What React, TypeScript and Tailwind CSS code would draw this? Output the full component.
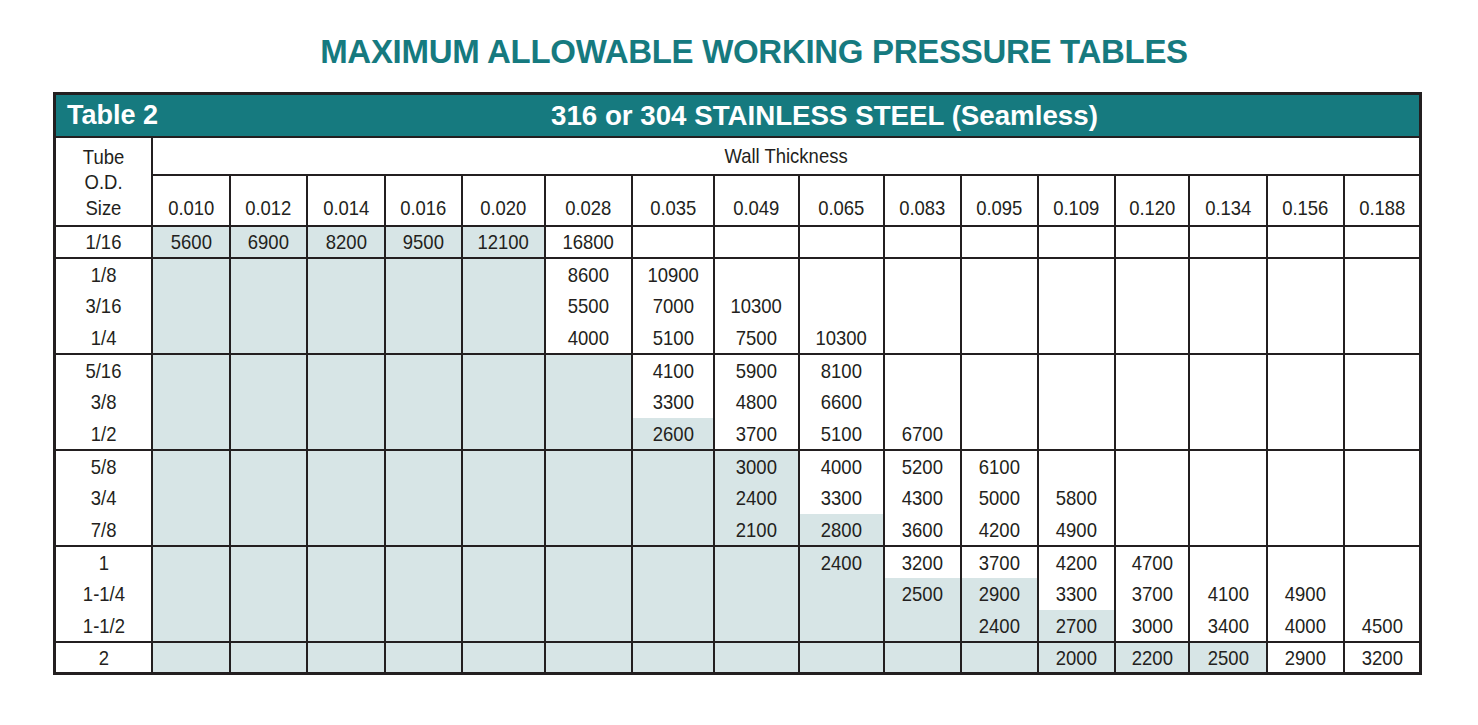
const thicknesses = [
  '0.010', '0.012', '0.014', '0.016', '0.020', '0.028', '0.035', '0.049',
  '0.065', '0.083', '0.095', '0.109', '0.120', '0.134', '0.156', '0.188',
]

type Row = { size: string; start: number; values: string[]; shaded: number }

// each inner array is one block of rows between ruled lines
const groups: Row[][] = [
  [{ size: '1/16', start: 0, values: ['5600', '6900', '8200', '9500', '12100', '16800'], shaded: 5 }],
  [
    { size: '1/8', start: 5, values: ['8600', '10900'], shaded: 5 },
    { size: '3/16', start: 5, values: ['5500', '7000', '10300'], shaded: 5 },
    { size: '1/4', start: 5, values: ['4000', '5100', '7500', '10300'], shaded: 5 },
  ],
  [
    { size: '5/16', start: 6, values: ['4100', '5900', '8100'], shaded: 6 },
    { size: '3/8', start: 6, values: ['3300', '4800', '6600'], shaded: 6 },
    { size: '1/2', start: 6, values: ['2600', '3700', '5100', '6700'], shaded: 7 },
  ],
  [
    { size: '5/8', start: 7, values: ['3000', '4000', '5200', '6100'], shaded: 8 },
    { size: '3/4', start: 7, values: ['2400', '3300', '4300', '5000', '5800'], shaded: 8 },
    { size: '7/8', start: 7, values: ['2100', '2800', '3600', '4200', '4900'], shaded: 9 },
  ],
  [
    { size: '1', start: 8, values: ['2400', '3200', '3700', '4200', '4700'], shaded: 9 },
    { size: '1-1/4', start: 9, values: ['2500', '2900', '3300', '3700', '4100', '4900'], shaded: 11 },
    { size: '1-1/2', start: 10, values: ['2400', '2700', '3000', '3400', '4000', '4500'], shaded: 12 },
  ],
  [{ size: '2', start: 11, values: ['2000', '2200', '2500', '2900', '3200'], shaded: 14 }],
]

const subRowHeights = (count: number, gi: number) => {
  if (count === 3) return ['h-[31px]', 'h-[32px]', 'h-[31px]']
  return gi === 0 ? ['h-[30px]'] : ['h-[29px]']
}

// the printed table uses a condensed face, so squeeze the glyphs a little
function Narrow({ children }: { children: React.ReactNode }) {
  return <span className="inline-block scale-x-[0.88] whitespace-nowrap">{children}</span>
}

export default function App() {
  return (
    <div className="min-h-screen bg-white font-['Liberation_Sans',Arial,sans-serif] text-[#231f20]">
      <div className="pl-[53px] pt-[35px]">
        <h1 className="w-[1369px] pl-[33px] text-center text-[33px] leading-[33px] font-bold tracking-[-0.3px] text-[#167a7f]">
          MAXIMUM ALLOWABLE WORKING PRESSURE TABLES
        </h1>

        <div className="mt-[24px] w-[1369px] border-[3px] border-[#231f20] bg-[#231f20]">
          <div className="grid grid-cols-[95px_76px_75px_76px_75px_81px_85px_80px_83px_83px_75px_75px_75px_72px_76px_75px_74px] gap-[2px]">
            {/* Title bar */}
            <div className="col-span-full flex h-[41px] items-center bg-[#167a7f] pl-[11px] font-bold text-white">
              <span className="text-[27px]">Table 2</span>
              <span className="ml-[393px] text-[27.7px]">316 or 304 STAINLESS STEEL (Seamless)</span>
            </div>

            {/* Header */}
            <div className="row-span-2 flex flex-col items-center justify-end bg-white pb-[5px] text-[21px] leading-[25.5px]">
              <Narrow>Tube</Narrow>
              <Narrow>O.D.</Narrow>
              <Narrow>Size</Narrow>
            </div>
            <div className="col-span-16 flex h-[36px] items-center justify-center bg-white text-[21px]">
              <Narrow>Wall Thickness</Narrow>
            </div>
            {thicknesses.map((t) => (
              <div
                key={t}
                className="flex h-[49px] items-end justify-center bg-white pb-[5px] text-[21px] leading-[25.5px]"
              >
                <Narrow>{t}</Narrow>
              </div>
            ))}

            {/* Body */}
            {groups.map((group, gi) => {
              const heights = subRowHeights(group.length, gi)
              return [
                <div key={`s${gi}`} className="flex flex-col bg-white">
                  {group.map((row, ri) => (
                    <div
                      key={row.size}
                      className={`flex ${heights[ri]} items-center justify-center text-[21px]`}
                    >
                      <Narrow>{row.size}</Narrow>
                    </div>
                  ))}
                </div>,
                ...thicknesses.map((t, ci) => (
                  <div key={`${gi}-${t}`} className="flex flex-col bg-white">
                    {group.map((row, ri) => {
                      const idx = ci - row.start
                      const value = idx >= 0 && idx < row.values.length ? row.values[idx] : ''
                      return (
                        <div
                          key={row.size}
                          className={`flex ${heights[ri]} items-center justify-center text-[21px] ${
                            ci < row.shaded ? 'bg-[#d7e5e6]' : 'bg-white'
                          }`}
                        >
                          {value && <Narrow>{value}</Narrow>}
                        </div>
                      )
                    })}
                  </div>
                )),
              ]
            })}
          </div>
        </div>
      </div>
    </div>
  )
}
